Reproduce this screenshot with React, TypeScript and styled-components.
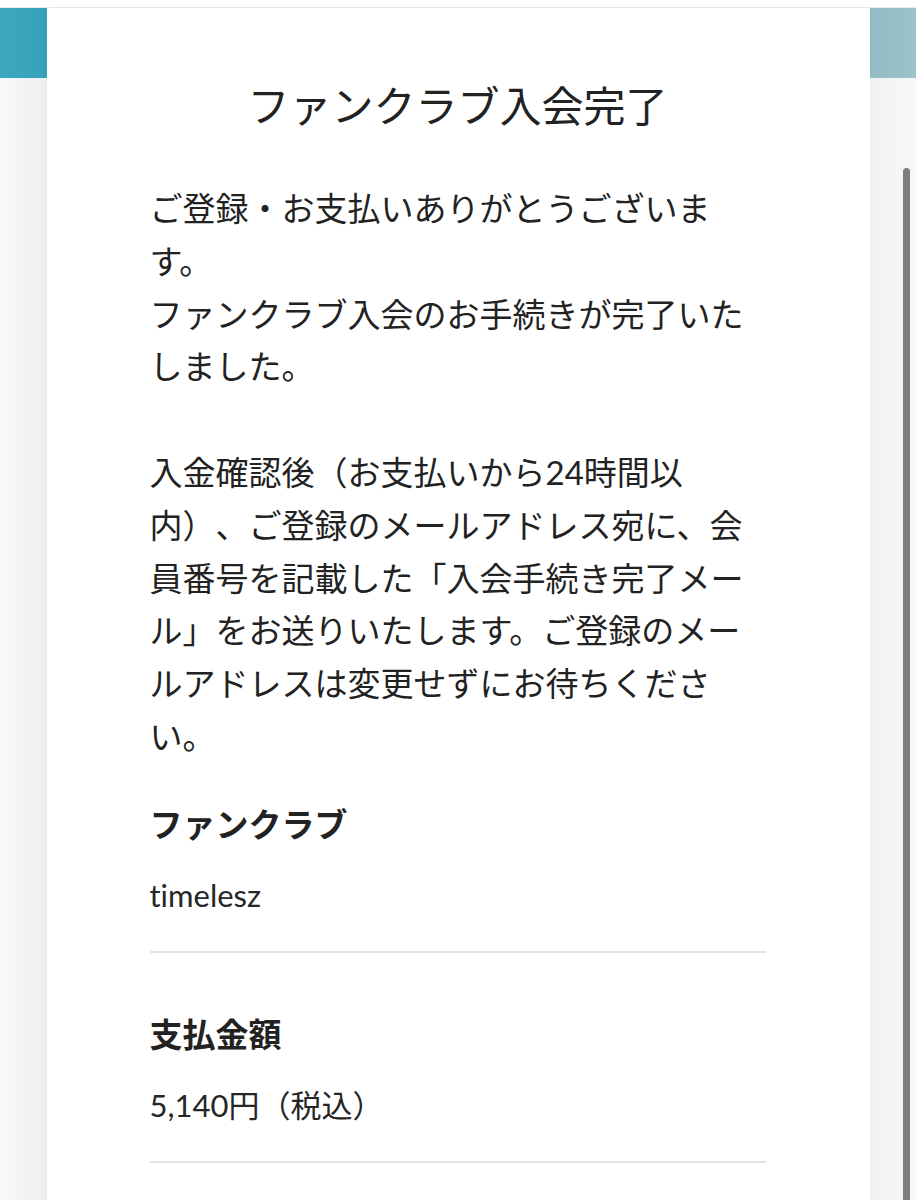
import React from 'react';
import styled, { createGlobalStyle } from 'styled-components';

const GlobalStyle = createGlobalStyle`
  html, body {
    margin: 0;
    padding: 0;
    background: #ffffff;
    overflow: hidden;
  }

  body {
    font-family: Lato, "Noto Sans CJK JP", sans-serif;
    font-variant-ligatures: none;
    text-spacing-trim: space-all;
    color: #222222;
  }
`

type Side = 'left' | 'right';

type Detail = {
  label: string;
  value: string;
}

const details: Detail[] = [
  { label: 'ファンクラブ', value: 'timelesz' },
  { label: '支払金額', value: '5,140円（税込）' },
];

export default function App() {
  return (
    <Page>
      <GlobalStyle />
      <TopStrip />
      <Stage>
        <Gutter side='left'>
          <GutterHead side='left' />
        </Gutter>

        <Panel>
          <Title>ファンクラブ入会完了</Title>
          <Message>
            ご登録・お支払いありがとうございます。<br />
            ファンクラブ入会のお手続きが完了いたしました。<br />
            <br />
            入金確認後（お支払いから24時間以内）、ご登録のメールアドレス宛に、会員番号を記載した「入会手続き完了メール」をお送りいたします。ご登録のメールアドレスは変更せずにお待ちください。
          </Message>

          {details.map((d) => (
            <Section key={d.label}>
              <Label>{d.label}</Label>
              <Value>{d.value}</Value>
            </Section>
          ))}
        </Panel>

        <Gutter side='right'>
          <GutterHead side='right' />
          <ScrollThumb />
        </Gutter>
      </Stage>
    </Page>
  )
}

const Page = styled.div`
  display: flex;
  flex-direction: column;
  min-height: 100vh;
`

const TopStrip = styled.div`
  height: 7px;
  background: #ffffff;
  border-bottom: 1px solid #ebebeb;
`

const Stage = styled.div`
  flex: 1;
  display: flex;
  align-items: stretch;
`

const Gutter = styled.div<{ side: Side }>`
  flex: 1;
  display: flex;
  flex-direction: column;
  background: ${({ side }) =>
    side === 'left'
      ? 'linear-gradient(to right, #f9f9f9, #eeeeee)'
      : 'linear-gradient(to right, #f1f1f1, #f8f8f8)'};
`

const GutterHead = styled.div<{ side: Side }>`
  height: 70px;
  background: ${({ side }) =>
    side === 'left'
      ? 'linear-gradient(to right, #3ea8c0, #37a1b9)'
      : 'linear-gradient(to right, #94bbc3, #9cc3ca)'};
`

const ScrollThumb = styled.div`
  flex: 1;
  width: 7px;
  margin: 90px 6px 0 auto;
  border-radius: 4px 4px 0 0;
  background: #7e7e7e;
`

const Panel = styled.main`
  flex: none;
  width: 823px;
  box-sizing: border-box;
  padding: 64px 104px 20px 103px;
  background: #ffffff;
  box-shadow: 0 0 6px rgba(0, 0, 0, 0.04);
`

const Title = styled.h1`
  margin: 0;
  font-family: "Noto Sans CJK JP", sans-serif;
  font-size: 42px;
  font-weight: 400;
  line-height: 63px;
  text-align: center;
  color: #222222;
`

const Message = styled.p`
  margin: 47px 0 36px;
  font-size: 33px;
  line-height: 52.8px;
  color: #222222;
`

const Section = styled.section`
  padding-bottom: 29px;
  border-bottom: 2px solid #e4e4e4;

  & + & {
    margin-top: 56px;
  }
`

const Label = styled.h3`
  margin: 0 0 21px;
  font-family: "Noto Sans CJK JP", sans-serif;
  font-size: 33px;
  font-weight: 700;
  line-height: 49px;
  color: #222222;
`

const Value = styled.div`
  font-size: 31px;
  line-height: 53px;
  color: #262626;
`
